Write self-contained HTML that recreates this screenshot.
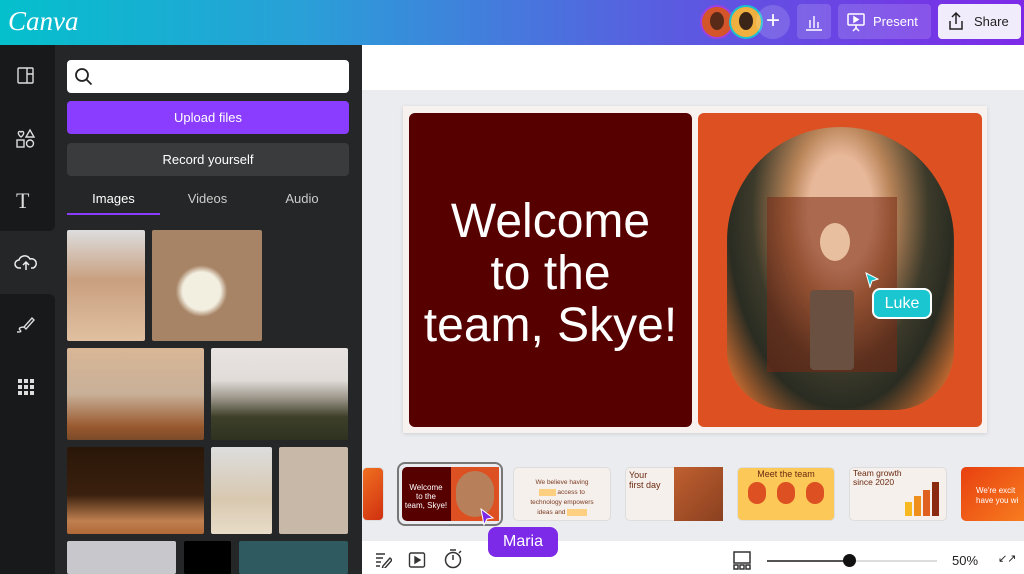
<!DOCTYPE html>
<html style="overflow:hidden;width:1024px;height:574px"><head><meta charset="utf-8"><style>
*{margin:0;padding:0;box-sizing:border-box}
body{width:1024px;height:574px;overflow:hidden;font-family:"Liberation Sans",sans-serif;background:#ebecf0;position:relative}
.a{position:absolute}
.hdr{left:0;top:0;width:1024px;height:45px;background:linear-gradient(90deg,#04c0cc 0%,#2a9fd8 30%,#5a5ce0 65%,#7d2ae8 100%)}
.rail{left:0;top:45px;width:55px;height:529px;background:#252627}
.panel{left:55px;top:45px;width:307px;height:529px;background:#252627}
.img{position:absolute;border-radius:2px}
.ic{position:absolute;color:#ddd}
.thumb{position:absolute;top:467px;height:54px;border-radius:5px;overflow:hidden;border:1px solid #ddd}
</style></head><body>
<div class="a hdr"></div>
<div class="a" style="left:8px;top:6px;color:#fff;font-family:'Liberation Serif',serif;font-style:italic;font-size:27px">Canva</div>
<div class="a" style="left:700px;top:5px;width:34px;height:34px;border-radius:50%;background:#d4552a;border:2px solid #a040e0"></div>
<div class="a" style="left:710px;top:12px;width:14px;height:18px;border-radius:50%;background:#5a2a18"></div>
<div class="a" style="left:729px;top:5px;width:34px;height:34px;border-radius:50%;background:#f0b040;border:2px solid #1bc0d0"></div>
<div class="a" style="left:739px;top:12px;width:14px;height:18px;border-radius:50%;background:#3a2518"></div>
<div class="a" style="left:756px;top:5px;width:34px;height:34px;border-radius:50%;background:rgba(255,255,255,.15);color:#fff;font-size:24px;text-align:center;line-height:32px">+</div>
<div class="a" style="left:797px;top:4px;width:34px;height:35px;border-radius:4px;background:rgba(255,255,255,.15)"></div>
<svg class="a" style="left:804px;top:12px" width="20" height="20" fill="none" stroke="#fff" stroke-width="1.4"><path d="M2 18h16M6 16V8M10 16V4M14 16V10"/></svg>
<div class="a" style="left:838px;top:4px;width:93px;height:35px;border-radius:4px;background:rgba(255,255,255,.15);color:#fff;font-size:13px;line-height:35px;padding-left:35px">Present</div>
<svg class="a" style="left:846px;top:12px" width="20" height="20" fill="none" stroke="#fff" stroke-width="1.5"><rect x="2" y="2" width="16" height="11" rx="1"/><path d="M8 5l4 2.5L8 10z" fill="#fff"/><path d="M10 13v3M7 19l3-3 3 3"/></svg>
<div class="a" style="left:938px;top:4px;width:83px;height:35px;border-radius:4px;background:#f1ecfb;color:#222;font-size:13px;line-height:35px;padding-left:36px">Share</div>
<svg class="a" style="left:946px;top:11px" width="20" height="20" fill="none" stroke="#222" stroke-width="1.5"><path d="M10 13V2M6 6l4-4 4 4M4 10v8h12v-8"/></svg>

<div class="a rail"></div>
<div class="a" style="left:0;top:45px;width:55px;height:186px;background:#18191b;border-radius:0 0 6px 0"></div>
<div class="a" style="left:0;top:294px;width:55px;height:280px;background:#18191b;border-radius:0 6px 0 0"></div>
<svg class="ic" style="left:16px;top:66px" width="20" height="20" fill="none" stroke="#ddd" stroke-width="1.4"><rect x="2" y="2" width="15" height="15" rx="1"/><path d="M11 2v15M11 8h6"/></svg>
<svg class="ic" style="left:15px;top:128px" width="22" height="22" fill="none" stroke="#ddd" stroke-width="1.4"><path d="M6 9C2 6 3 2 6 4c3-2 4 2 0 5z"/><path d="M15 2l4 7h-8z"/><rect x="2" y="12" width="7" height="7"/><circle cx="15" cy="15.5" r="3.5"/></svg>
<div class="ic" style="left:16px;top:188px;font-family:'Liberation Serif',serif;font-size:22px">T</div>
<svg class="ic" style="left:14px;top:251px" width="24" height="22" fill="none" stroke="#eee" stroke-width="1.5"><path d="M7 17H5a4 4 0 010-8 6 6 0 0111-1 4.5 4.5 0 013 9h-2"/><path d="M12 19v-8M9 14l3-3 3 3"/></svg>
<svg class="ic" style="left:15px;top:313px" width="22" height="22" fill="none" stroke="#ddd" stroke-width="1.4"><path d="M9 14l8-9 2 2-8 9zM9 14c-3 0-6 1-4 3s0 2-3 2"/></svg>
<svg class="ic" style="left:17px;top:378px" width="18" height="18" fill="#ddd"><rect x="1" y="1" width="4" height="4"/><rect x="7" y="1" width="4" height="4"/><rect x="13" y="1" width="4" height="4"/><rect x="1" y="7" width="4" height="4"/><rect x="7" y="7" width="4" height="4"/><rect x="13" y="7" width="4" height="4"/><rect x="1" y="13" width="4" height="4"/><rect x="7" y="13" width="4" height="4"/><rect x="13" y="13" width="4" height="4"/></svg>

<div class="a panel"></div>
<div class="a" style="left:67px;top:60px;width:282px;height:33px;background:#fff;border-radius:4px"></div>
<svg class="a" style="left:74px;top:67px" width="20" height="20" fill="none" stroke="#222" stroke-width="1.8"><circle cx="8" cy="8" r="6"/><path d="M12.5 12.5l5 5"/></svg>
<div class="a" style="left:67px;top:101px;width:282px;height:33px;background:#8b3dff;border-radius:4px;color:#fff;font-size:13px;text-align:center;line-height:33px">Upload files</div>
<div class="a" style="left:67px;top:143px;width:282px;height:33px;background:#3a3b3d;border-radius:4px;color:#fff;font-size:13px;text-align:center;line-height:33px">Record yourself</div>
<div class="a" style="left:67px;top:191px;width:93px;text-align:center;color:#fff;font-size:13px">Images</div>
<div class="a" style="left:67px;top:213px;width:93px;height:2px;background:#8b3dff"></div>
<div class="a" style="left:160px;top:191px;width:95px;text-align:center;color:#ccc;font-size:13px">Videos</div>
<div class="a" style="left:255px;top:191px;width:94px;text-align:center;color:#ccc;font-size:13px">Audio</div>

<div class="img" style="left:67px;top:230px;width:78px;height:111px;background:linear-gradient(180deg,#ddd 0%,#c9a080 45%,#e0c0a0 100%)"></div>
<div class="img" style="left:152px;top:230px;width:110px;height:111px;background:radial-gradient(circle at 45% 55%,#f2eee0 0 22%,#a88466 30%,#a88466 100%)"></div>
<div class="img" style="left:67px;top:348px;width:137px;height:92px;background:linear-gradient(180deg,#d9b696 0%,#c8b098 50%,#9a5a30 85%,#7a4a28 100%)"></div>
<div class="img" style="left:211px;top:348px;width:137px;height:92px;background:linear-gradient(180deg,#e8e3e0 0%,#e0dcd8 35%,#9a9488 55%,#3d3f28 75%,#2e3220 100%)"></div>
<div class="img" style="left:67px;top:447px;width:137px;height:87px;background:linear-gradient(180deg,#2a1608 0%,#3a200e 55%,#c08050 85%,#b06838 100%)"></div>
<div class="img" style="left:211px;top:447px;width:61px;height:87px;background:linear-gradient(180deg,#ddd 0%,#d8c8b0 60%,#e8dcc8 100%)"></div>
<div class="img" style="left:279px;top:447px;width:69px;height:87px;background:#c8b8a8"></div>
<div class="img" style="left:67px;top:541px;width:109px;height:33px;background:#c8c8cc"></div>
<div class="img" style="left:184px;top:541px;width:47px;height:33px;background:#000"></div>
<div class="img" style="left:239px;top:541px;width:109px;height:33px;background:#2e5a60"></div>

<div class="a" style="left:362px;top:45px;width:662px;height:45px;background:#fff"></div>
<div class="a" style="left:403px;top:106px;width:584px;height:327px;background:#f7f2ef;box-shadow:0 1px 4px rgba(0,0,0,.12)"></div>
<div class="a" style="left:409px;top:113px;width:283px;height:314px;background:#570000;border-radius:6px"></div>
<div class="a" style="left:409px;top:196px;width:283px;text-align:center;color:#fff;font-size:48px;line-height:52px">Welcome<br>to the<br>team, Skye!</div>
<div class="a" style="left:698px;top:113px;width:284px;height:314px;background:#dd5022;border-radius:6px"></div>
<div class="a" style="left:727px;top:127px;width:227px;height:283px;border-radius:114px 114px 60px 60px;background:radial-gradient(ellipse at 50% 30%,#e8b89a 0 20%,#b88458 32%,#3c3a2a 55%,#2a2c22 70%,#c46a30 90%)"></div>
<div class="a" style="left:767px;top:197px;width:130px;height:175px;background:rgba(120,40,20,.55)"></div>
<div class="a" style="left:810px;top:290px;width:44px;height:80px;background:#6a5040;border-radius:4px"></div>
<div class="a" style="left:820px;top:223px;width:30px;height:38px;border-radius:50%;background:#e8c0a0"></div>
<svg class="a" style="left:865px;top:272px" width="14" height="16"><path d="M1 1l12 6-6 2-2 6z" fill="#1ac6cf" stroke="#fff"/></svg>
<div class="a" style="left:872px;top:288px;width:60px;height:31px;background:#1ac6cf;border:2px solid #fff;border-radius:8px;color:#fff;font-size:16px;text-align:center;line-height:27px">Luke</div>

<div class="a" style="left:362px;top:455px;width:662px;height:86px;background:#ebecf0"></div>
<div class="thumb" style="left:362px;width:22px;background:linear-gradient(135deg,#f07020,#d03010)"></div>
<div class="a" style="left:397px;top:462px;width:106px;height:64px;border:2px solid #777;border-radius:8px"></div>
<div class="thumb" style="left:402px;width:97px;border:none;background:#570000"></div>
<div class="a" style="left:402px;top:483px;width:48px;text-align:center;color:#fff;font-size:8px;line-height:9px">Welcome<br>to the<br>team, Skye!</div>
<div class="a" style="left:451px;top:467px;width:48px;height:54px;background:#dd5022"></div>
<div class="a" style="left:456px;top:471px;width:38px;height:46px;border-radius:19px;background:#b8805a"></div>
<div class="thumb" style="left:513px;width:98px;background:#f6f0ec"></div>
<div class="a" style="left:513px;top:478px;width:98px;text-align:center;color:#7a3a20;font-size:6.5px;line-height:10px">We believe having<br><span style="background:#fcd080;color:#fcd080">afford</span> access to<br>technology empowers<br>ideas and <span style="background:#fcd080;color:#fcd080">expres</span></div>
<div class="thumb" style="left:625px;width:98px;background:#f6f0ec"></div>
<div class="a" style="left:629px;top:470px;color:#6a2a10;font-size:9px;line-height:10px">Your<br>first day</div>
<div class="a" style="left:674px;top:467px;width:49px;height:54px;background:linear-gradient(135deg,#c06030,#8a4020)"></div>
<div class="thumb" style="left:737px;width:98px;background:#fcc858"></div>
<div class="a" style="left:737px;top:469px;width:98px;text-align:center;color:#6a2a10;font-size:9px">Meet the team</div>
<div class="a" style="left:748px;top:482px;width:18px;height:22px;border-radius:9px;background:#dd5022"></div>
<div class="a" style="left:777px;top:482px;width:18px;height:22px;border-radius:9px;background:#dd5022"></div>
<div class="a" style="left:806px;top:482px;width:18px;height:22px;border-radius:9px;background:#dd5022"></div>
<div class="thumb" style="left:849px;width:98px;background:#f6f0ec"></div>
<div class="a" style="left:853px;top:469px;color:#6a2a10;font-size:8.5px;line-height:9px">Team growth<br>since 2020</div>
<div class="a" style="left:905px;top:502px;width:7px;height:14px;background:#f8b820"></div>
<div class="a" style="left:914px;top:496px;width:7px;height:20px;background:#f0901c"></div>
<div class="a" style="left:923px;top:490px;width:7px;height:26px;background:#e06020"></div>
<div class="a" style="left:932px;top:482px;width:7px;height:34px;background:#8a2a10"></div>
<div class="thumb" style="left:961px;width:70px;border:none;background:linear-gradient(135deg,#e84010,#f88020)"></div>
<div class="a" style="left:976px;top:486px;color:#fff;font-size:8px;line-height:10px">We're excit<br>have you wi</div>

<div class="a" style="left:362px;top:541px;width:662px;height:33px;background:#fff"></div>
<svg class="a" style="left:374px;top:550px" width="18" height="18" fill="none" stroke="#333" stroke-width="1.4"><path d="M2 4h9M2 8h7M2 12h5M2 16h4M9 16l7-8 2 2-7 8-3 1z"/></svg>
<svg class="a" style="left:408px;top:551px" width="18" height="18" fill="none" stroke="#333" stroke-width="1.4"><rect x="1.5" y="2" width="15" height="14" rx="1.5"/><path d="M7 6l5 3-5 3z" fill="#333"/></svg>
<svg class="a" style="left:443px;top:548px" width="20" height="22" fill="none" stroke="#333" stroke-width="1.5"><circle cx="10" cy="12" r="7.5"/><path d="M7 2h6M10 12V7M16 5l2-2"/></svg>
<svg class="a" style="left:732px;top:551px" width="20" height="20" fill="none" stroke="#333" stroke-width="1.5"><rect x="2" y="1" width="16" height="11"/><rect x="2" y="14" width="4" height="4"/><rect x="8" y="14" width="4" height="4"/><rect x="14" y="14" width="4" height="4"/></svg>
<div class="a" style="left:767px;top:560px;width:170px;height:2px;background:#ddd"></div>
<div class="a" style="left:767px;top:560px;width:82px;height:2px;background:#555"></div>
<div class="a" style="left:843px;top:554px;width:13px;height:13px;border-radius:50%;background:#111"></div>
<div class="a" style="left:952px;top:553px;color:#222;font-size:13px">50%</div>
<div class="a" style="left:998px;top:552px;color:#222;font-size:11px">↙↗</div>

<svg class="a" style="left:479px;top:508px" width="16" height="18"><path d="M2 1l12 9-6 1-3 6z" fill="#7d2ae8" stroke="#fff"/></svg>
<div class="a" style="left:488px;top:527px;width:70px;height:30px;background:#7d2ae8;border-radius:8px;color:#fff;font-size:16px;text-align:center;line-height:30px">Maria</div>
</body></html>
